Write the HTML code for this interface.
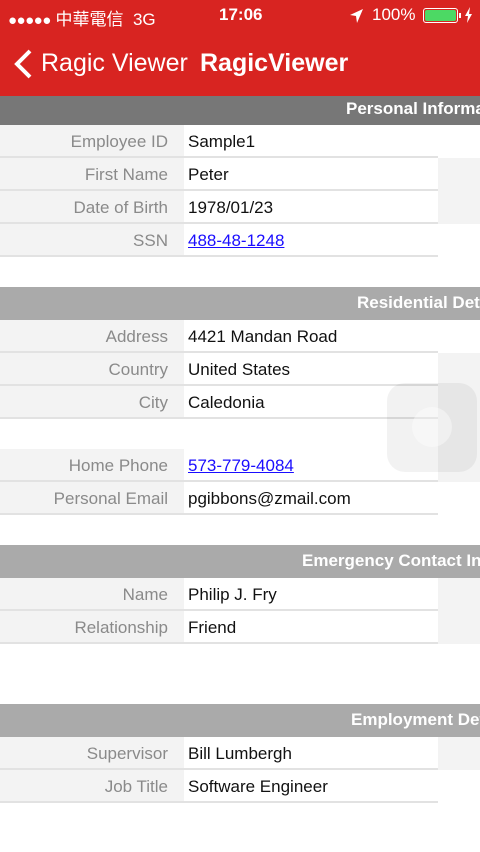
<!DOCTYPE html>
<html><head><meta charset="utf-8"><style>
*{margin:0;padding:0;box-sizing:border-box}
body{width:480px;height:852px;overflow:hidden;background:#fff;font-family:"Liberation Sans","Noto Sans CJK TC",sans-serif;position:relative}
.a{position:absolute}
.top{left:0;top:0;width:480px;height:96px;background:#d82421;color:#fff}
.hdr{left:0;width:480px;height:33px;background:#aaa;overflow:hidden}
.hdr span{position:absolute;top:6px;font-weight:bold;font-size:17px;color:#fff;white-space:nowrap}
.lab{left:0;width:184px;height:33px;background:#f3f3f3;color:#8a8a8a;font-size:17px;text-align:right;padding-right:16px;line-height:34px;border-bottom:2px solid #e2e2e2}
.val{left:184px;width:254px;height:33px;background:#fff;color:#111;font-size:17px;line-height:34px;padding-left:4px;border-bottom:2px solid #e2e2e2}
.val a{color:#1a0dff;text-decoration:underline}
.g{left:438px;width:42px;background:#f3f3f3}
</style></head><body>
<div class="a top">
<div class="a" style="left:8px;top:5px;font-size:17px;white-space:nowrap"><span style="font-size:15px;letter-spacing:-0.5px">●●●●●</span> 中華電信&nbsp;&nbsp;3G</div>
<div class="a" style="left:219px;top:5px;font-size:17px;font-weight:bold">17:06</div>
<svg class="a" style="left:349px;top:8px" width="16" height="16" viewBox="0 0 16 16"><path d="M14 1L1 7l6 1 1 7z" fill="#fff"/></svg>
<div class="a" style="left:372px;top:5px;font-size:17px">100%</div>
<div class="a" style="left:423px;top:8px;width:35px;height:15px;border:1px solid #fff;border-radius:3px;padding:1px"><div style="width:100%;height:100%;background:#4cd964;border-radius:2px"></div></div>
<div class="a" style="left:459px;top:13px;width:2px;height:5px;background:#fff"></div>
<svg class="a" style="left:464px;top:7px" width="9" height="16" viewBox="0 0 9 16"><path d="M6 0L1 9h3l-1 7 5-9H5z" fill="#fff"/></svg>
<svg class="a" style="left:12px;top:48px" width="22" height="32" viewBox="0 0 22 32"><path d="M18 3L5 16l13 13" fill="none" stroke="#fff" stroke-width="4"/></svg>
<div class="a" style="left:41px;top:49px;font-size:25px">Ragic Viewer</div>
<div class="a" style="left:200px;top:49px;font-size:25px;font-weight:bold">RagicViewer</div>
</div>

<div class="a hdr" style="top:96px;height:29px;background:#777"><span style="left:346px;top:3px">Personal Information</span></div>
<div class="a lab" style="top:125px">Employee ID</div><div class="a val" style="top:125px">Sample1</div>
<div class="a g" style="top:158px;height:66px"></div>
<div class="a lab" style="top:158px">First Name</div><div class="a val" style="top:158px">Peter</div>
<div class="a lab" style="top:191px">Date of Birth</div><div class="a val" style="top:191px">1978/01/23</div>
<div class="a lab" style="top:224px">SSN</div><div class="a val" style="top:224px"><a>488-48-1248</a></div>

<div class="a hdr" style="top:287px"><span style="left:357px">Residential Details</span></div>
<div class="a lab" style="top:320px">Address</div><div class="a val" style="top:320px">4421 Mandan Road</div>
<div class="a g" style="top:353px;height:129px"></div>
<div class="a lab" style="top:353px">Country</div><div class="a val" style="top:353px">United States</div>
<div class="a lab" style="top:386px">City</div><div class="a val" style="top:386px">Caledonia</div>
<div class="a lab" style="top:449px">Home Phone</div><div class="a val" style="top:449px"><a>573-779-4084</a></div>
<div class="a lab" style="top:482px">Personal Email</div><div class="a val" style="top:482px">pgibbons@zmail.com</div>
<div class="a" style="left:387px;top:383px;width:90px;height:89px;border-radius:18px;background:rgba(0,0,0,0.05)"></div>
<div class="a" style="left:412px;top:407px;width:40px;height:40px;border-radius:50%;background:rgba(255,255,255,0.4)"></div>

<div class="a hdr" style="top:545px"><span style="left:302px">Emergency Contact Info</span></div>
<div class="a g" style="top:578px;height:66px"></div>
<div class="a lab" style="top:578px">Name</div><div class="a val" style="top:578px">Philip J. Fry</div>
<div class="a lab" style="top:611px">Relationship</div><div class="a val" style="top:611px">Friend</div>

<div class="a hdr" style="top:704px"><span style="left:351px">Employment Details</span></div>
<div class="a g" style="top:737px;height:33px"></div>
<div class="a lab" style="top:737px">Supervisor</div><div class="a val" style="top:737px">Bill Lumbergh</div>
<div class="a lab" style="top:770px">Job Title</div><div class="a val" style="top:770px">Software Engineer</div>
</body></html>
